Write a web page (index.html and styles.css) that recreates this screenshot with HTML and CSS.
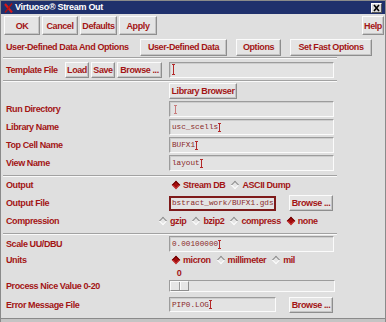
FILE: index.html
```
<!DOCTYPE html>
<html>
<head>
<meta charset="utf-8">
<link rel="stylesheet" href="styles.css">
</head>
<body>
<div class="win">
  <div class="title">
    <svg class="logo" width="9" height="10" viewBox="0 0 9 10"><path d="M1 1 L8 9.5" stroke="#d81818" stroke-width="2.2"/><path d="M8 0.5 L1 9.5" stroke="#b01010" stroke-width="1.4"/></svg>
    <span class="ttext">Virtuoso® Stream Out</span>
    <span class="close"><svg width="9" height="8" viewBox="0 0 9 8"><path d="M2 1 L7 7 M7 1 L2 7" stroke="#000" stroke-width="1.6"/></svg></span>
  </div>
  <div class="bar1">
    <button class="btn w-ok">OK</button>
    <button class="btn w-cancel">Cancel</button>
    <button class="btn w-def">Defaults</button>
    <button class="btn w-apply">Apply</button>
    <button class="btn w-help">Help</button>
  </div>
  <div class="bar2">
    <span class="lab2">User-Defined Data And Options</span>
    <button class="btn w-udd">User-Defined Data</button>
    <button class="btn w-opt">Options</button>
    <button class="btn w-sfo">Set Fast Options</button>
  </div>
  <div class="sep"></div>
  <div class="tmpl">
    <span class="lab-t">Template File</span>
    <button class="btn sm w-load">Load</button>
    <button class="btn sm w-save">Save</button>
    <button class="btn sm w-browse">Browse ...</button>
    <div class="fld f-tmpl"><span class="caret big"></span></div>
  </div>
  <div class="sep"></div>
  <div class="row h18">
    <span class="lab"></span>
    <button class="btn sm w-lib">Library Browser</button>
  </div>
  <div class="row h18">
    <span class="lab">Run Directory</span>
    <div class="fld f-full"><span class="caret dim"></span></div>
  </div>
  <div class="row h18">
    <span class="lab">Library Name</span>
    <div class="fld f-full">usc_scells<span class="caret"></span></div>
  </div>
  <div class="row h18">
    <span class="lab">Top Cell Name</span>
    <div class="fld f-full">BUFX1<span class="caret"></span></div>
  </div>
  <div class="row h18">
    <span class="lab">View Name</span>
    <div class="fld f-full">layout<span class="caret"></span></div>
  </div>
  <div class="sep sep-b"></div>
  <div class="row h14">
    <span class="lab">Output</span>
    <div class="radios">
      <span class="rb"><span class="dia on"></span>Stream DB</span>
      <span class="rb"><span class="dia"></span>ASCII Dump</span>
    </div>
  </div>
  <div class="row h22">
    <span class="lab">Output File</span>
    <div class="fld f-half focus">bstract_work/BUFX1.gds</div>
    <button class="btn sm w-br2">Browse ...</button>
  </div>
  <div class="row h14">
    <span class="lab">Compression</span>
    <div class="radios comp">
      <span class="rb"><span class="dia"></span>gzip</span>
      <span class="rb"><span class="dia"></span>bzip2</span>
      <span class="rb"><span class="dia"></span>compress</span>
      <span class="rb"><span class="dia on"></span>none</span>
    </div>
  </div>
  <div class="sep sep-c"></div>
  <div class="row h18">
    <span class="lab">Scale UU/DBU</span>
    <div class="fld f-full">0.00100000<span class="caret"></span></div>
  </div>
  <div class="row h13">
    <span class="lab">Units</span>
    <div class="radios">
      <span class="rb"><span class="dia on"></span>micron</span>
      <span class="rb"><span class="dia"></span>millimeter</span>
      <span class="rb"><span class="dia"></span>mil</span>
    </div>
  </div>
  <div class="row slider-row">
    <span class="lab lab-sl">Process Nice Value 0-20</span>
    <div class="slider">
      <div class="sval">0</div>
      <div class="trough"><span class="thumb"></span></div>
    </div>
  </div>
  <div class="row h21">
    <span class="lab">Error Message File</span>
    <div class="fld f-half">PIP0.LOG<span class="caret"></span></div>
    <button class="btn sm w-br2">Browse ...</button>
  </div>
  <div class="bottom"></div>
</div>
</body>
</html>
```
FILE: styles.css
```
* { box-sizing: border-box; }
html, body { margin: 0; padding: 0; }
body {
  width: 386px;
  height: 322px;
  overflow: hidden;
  background: #dfdfdf;
  font-family: "Liberation Sans", Arial, sans-serif;
  font-weight: bold;
  font-size: 9px;
  letter-spacing: -0.4px;
  color: #a31515;
}
.win {
  width: 386px;
  height: 322px;
  display: flex;
  flex-direction: column;
  border: 1px solid #8a8a8a;
  border-bottom: none;
  background: #dfdfdf;
}
.title {
  height: 13px;
  flex: none;
  background: #1f306c;
  display: flex;
  align-items: center;
  padding-left: 3px;
  color: #fff;
  letter-spacing: -0.3px;
}
.logo { flex: none; }
.ttext { margin-left: 2px; line-height: 13px; }
.close {
  margin-left: auto;
  margin-right: 3px;
  width: 11px;
  height: 10px;
  background: #d8d8d8;
  border: 1px solid;
  border-color: #fff #555 #555 #fff;
  display: flex;
  align-items: center;
  justify-content: center;
}
.btn {
  font: inherit;
  color: inherit;
  letter-spacing: inherit;
  margin: 0;
  padding: 0;
  background: #e4e4e4;
  border: 1px solid;
  border-color: #fbfbfb #8e8e8e #8e8e8e #fbfbfb;
  box-shadow: inset -1px -1px 0 #c4c4c4;
  display: flex;
  align-items: center;
  justify-content: center;
  flex: none;
  white-space: nowrap;
}
.bar1 {
  height: 22px;
  flex: none;
  display: flex;
  gap: 2px;
  padding: 2px 0 0 3px;
}
.bar1 .btn { height: 19px; }
.w-ok { width: 36px; }
.w-cancel { width: 36px; }
.w-def { width: 37px; }
.w-apply { width: 38px; }
.w-help { width: 22px; margin-left: auto; margin-right: 1px; }
.bar2 {
  height: 21px;
  flex: none;
  display: flex;
  align-items: center;
  padding: 1px 0 0 5px;
}
.bar2 .btn { height: 17px; }
.lab2 { width: 134px; flex: none; }
.w-udd { width: 87px; }
.w-opt { width: 45px; margin-left: 9px; }
.w-sfo { width: 82px; margin-left: 9px; }
.sep {
  height: 2px;
  flex: none;
  width: 334px;
  margin-left: 2px;
  border-top: 1px solid #a2a2a2;
  border-bottom: 1px solid #fafafa;
}
.sep-b { margin-top: 3px; margin-bottom: 1px; }
.sep-c { margin-top: 5px; }
.tmpl {
  height: 21px;
  flex: none;
  display: flex;
  align-items: center;
  padding-left: 5px;
}
.lab-t { width: 59px; flex: none; }
.btn.sm { height: 16px; }
.w-load { width: 24px; }
.w-save { width: 24px; margin-left: 2px; }
.w-browse { width: 45px; margin-left: 2px; }
.f-tmpl { margin-left: 7px; width: 165px; }
.row {
  flex: none;
  display: flex;
  align-items: center;
  padding-left: 5px;
}
.h13 { height: 13px; }
.h14 { height: 14px; }
.h18 { height: 18px; }
.h21 { height: 21px; }
.h22 { height: 22px; }
.lab { width: 163px; flex: none; white-space: nowrap; }
.w-lib { width: 68px; height: 15px; }
.fld {
  height: 16px;
  background: #e3e3e3;
  border: 1px solid;
  border-color: #9c9c9c #fbfbfb #fbfbfb #9c9c9c;
  box-shadow: inset 1px 1px 0 #cdcdcd;
  display: flex;
  align-items: center;
  padding-left: 2px;
  font-family: "Liberation Mono", "Courier New", monospace;
  font-weight: normal;
  font-size: 7.7px;
  letter-spacing: 0;
  color: #8a2a2a;
  white-space: nowrap;
  overflow: hidden;
  flex: none;
}
.f-full { width: 165px; }
.f-half { width: 107px; height: 15px; }
.f-half.focus { border: 2px solid #7e1a1a; box-shadow: none; padding-left: 1px; }
.w-br2 { width: 44px; height: 15px; margin-left: 13px; }
.caret {
  display: inline-block;
  width: 3px;
  height: 9px;
  margin-left: 0;
  border-top: 1px solid #b42828;
  border-bottom: 1px solid #b42828;
  background: linear-gradient(#b42828, #b42828) center / 1px 100% no-repeat;
  flex: none;
}
.caret.big { height: 11px; }
.caret.dim { opacity: 0.55; margin-left: 2px; }
.radios {
  display: flex;
  align-items: center;
  padding-left: 3px;
}
.radios.comp { margin-left: -13px; }
.rb {
  display: flex;
  align-items: center;
  gap: 3px;
  margin-right: 6px;
  white-space: nowrap;
}
.dia {
  width: 6px;
  height: 6px;
  margin: 0 1px;
  transform: rotate(45deg);
  background: #e6e6e6;
  border: 1px solid;
  border-color: #8c8c8c #fdfdfd #fdfdfd #8c8c8c;
  flex: none;
}
.dia.on {
  background: #a30c0c;
  border-color: #6e0000 #c84040 #c84040 #6e0000;
}
.slider-row {
  height: 28px;
  align-items: flex-end;
  padding-bottom: 2px;
}
.lab-sl { line-height: 12px; }
.slider { display: flex; flex-direction: column; }
.sval {
  height: 14px;
  line-height: 14px;
  width: 20px;
  text-align: center;
}
.trough {
  width: 166px;
  height: 12px;
  border: 1px solid;
  border-color: #9c9c9c #fbfbfb #fbfbfb #9c9c9c;
  background: #e3e3e3;
  display: flex;
}
.thumb {
  width: 19px;
  height: 10px;
  background: linear-gradient(to right, transparent 8px, #9a9a9a 8px, #9a9a9a 9px, #fbfbfb 9px, #fbfbfb 10px, transparent 10px), #e6e6e6;
  border: 1px solid;
  border-color: #fbfbfb #8e8e8e #8e8e8e #fbfbfb;
}
.bottom {
  margin-top: auto;
  height: 4px;
  flex: none;
  background: #c4c4c4;
  border-top: 1px solid #8a8a8a;
}
```
